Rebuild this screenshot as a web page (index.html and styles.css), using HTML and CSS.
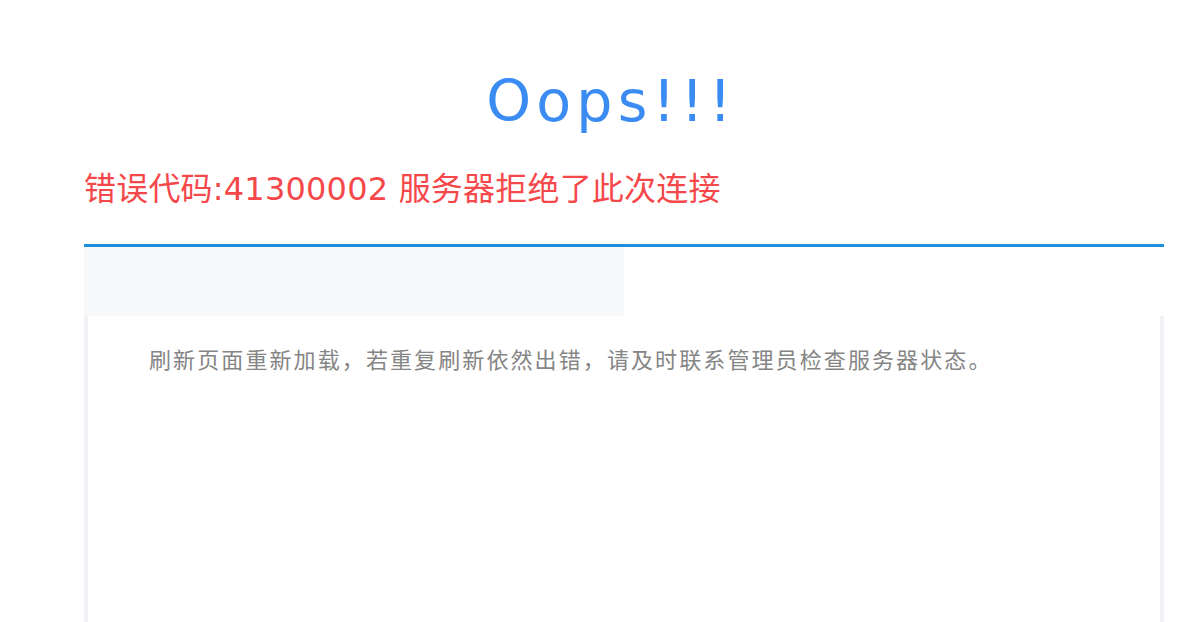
FILE: index.html
```html
<!DOCTYPE html>
<html lang="zh-CN">
<head>
<meta charset="utf-8">
<title>Oops!!!</title>
<link rel="stylesheet" href="styles.css">
</head>
<body>
<div class="container">
  <h1 class="title">Oops!!!</h1>
  <p class="error">错误代码:41300002 服务器拒绝了此次连接</p>
  <div class="tab">
    <div class="tab-title"></div>
    <div class="tab-head"></div>
    <div class="tab-content">
      <p class="tip">刷新页面重新加载，若重复刷新依然出错，请及时联系管理员检查服务器状态。</p>
    </div>
  </div>
</div>
</body>
</html>
```

FILE: styles.css
```css
html, body {
  margin: 0;
  padding: 0;
  background: #ffffff;
  height: 100%;
  overflow: hidden;
}

body {
  font-family: "DejaVu Sans", "Noto Sans CJK SC", sans-serif;
}

.container {
  width: 1080px;
  margin-left: 84px;
}

.title {
  margin: 72px 0 0 0;
  padding-right: 25px;
  font-size: 57px;
  line-height: 58px;
  font-weight: normal;
  letter-spacing: 5.2px;
  text-align: center;
  color: #3b8cf2;
}

.error {
  margin: 39px 0 0 0;
  font-size: 32px;
  line-height: 40px;
  letter-spacing: 0.2px;
  color: #f5484b;
}

.tab {
  margin-top: 35px;
}

.tab-title {
  height: 0;
  border-bottom: 3px solid #1e90db;
}

.tab-head {
  width: 540px;
  height: 69px;
  background: #f8f9fb;
}

.tab-content {
  height: 275px;
  border-left: 4px solid #f2f2f6;
  border-right: 4px solid #f2f2f6;
  padding: 31px 0 0 61px;
}

.tip {
  margin: 0;
  font-family: "Noto Sans CJK SC", sans-serif;
  font-size: 22px;
  line-height: 22px;
  letter-spacing: 2.1px;
  color: #858585;
}
```
